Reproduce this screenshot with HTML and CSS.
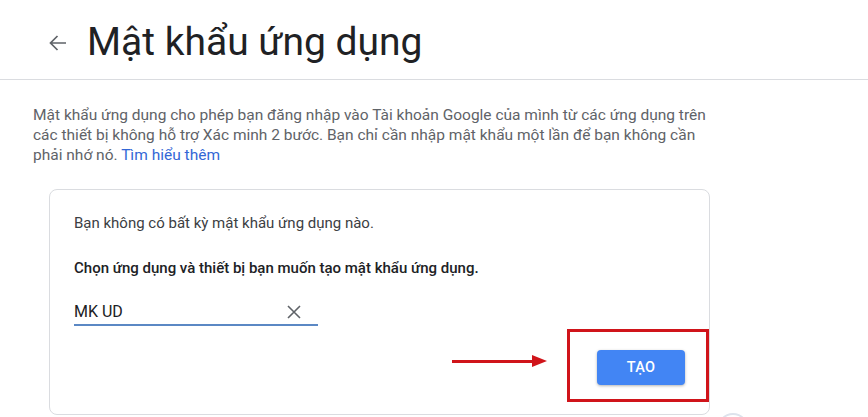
FILE: index.html
```html
<!DOCTYPE html>
<html lang="vi">
<head>
    <meta charset="UTF-8">
    <meta name="viewport" content="width=device-width, initial-scale=1.0">
    <title>Mật khẩu ứng dụng</title>
    <link rel="stylesheet" href="styles.css">
</head>
<body>
    <header class="top-bar">
        <a class="back-link" href="#">
            <svg width="18" height="18" viewBox="0 0 18 18"><path d="M17 9H1.5M8.5 2L1.5 9L8.5 16" fill="none" stroke="#5f6368" stroke-width="1.7"/></svg>
        </a>
        <h1>Mật khẩu ứng dụng</h1>
    </header>

    <main>
        <p class="intro">Mật khẩu ứng dụng cho phép bạn đăng nhập vào Tài khoản Google của mình từ các ứng dụng trên các thiết bị không hỗ trợ Xác minh 2 bước. Bạn chỉ cần nhập mật khẩu một lần để bạn không cần phải nhớ nó. <a href="#">Tìm hiểu thêm</a></p>

        <section class="card">
            <p class="empty-note">Bạn không có bất kỳ mật khẩu ứng dụng nào.</p>
            <p class="choose">Chọn ứng dụng và thiết bị bạn muốn tạo mật khẩu ứng dụng.</p>

            <div class="field">
                <span class="field-value">MK UD</span>
                <svg class="clear-icon" width="14" height="14" viewBox="0 0 14 14"><path d="M1 1L13 13M13 1L1 13" stroke="#5f6368" stroke-width="1.6"/></svg>
            </div>

            <div class="actions">
                <div class="create-wrap">
                    <span class="red-arrow"></span>
                    <span class="red-box"></span>
                    <button class="create-button">TẠO</button>
                </div>
            </div>
        </section>
    </main>

    <span class="help-circle"></span>
</body>
</html>
```

FILE: styles.css
```css
body {
    font-family: Roboto, "Liberation Sans", sans-serif;
    margin: 0;
    padding: 0;
    background-color: #fff;
    color: #3c4043;
    overflow: hidden;
}

.top-bar {
    display: flex;
    align-items: center;
    height: 79px;
    padding-left: 49px;
    border-bottom: 1px solid #dadce0;
}

.back-link {
    display: flex;
    margin-top: 6px;
}

.top-bar h1 {
    margin: 0 0 0 20px;
    font-size: 39px;
    font-weight: 400;
    color: #202124;
    padding-top: 4px;
}

.intro {
    margin: 25px 0 0 33px;
    width: 680px;
    font-size: 15.5px;
    line-height: 20px;
    color: #5f6368;
}

.intro a {
    color: #3367d6;
    text-decoration: none;
}

.card {
    margin: 24px 0 0 49px;
    width: 611px;
    padding: 23px 24px 29px 24px;
    border: 1px solid #dadce0;
    border-radius: 8px;
}

.card p {
    margin: 0;
    font-size: 15px;
    line-height: 20px;
}

.empty-note {
    color: #3c4043;
}

.choose {
    margin-top: 25px !important;
    font-weight: 500;
    color: #202124;
}

.field {
    display: flex;
    align-items: center;
    justify-content: space-between;
    width: 244px;
    margin-top: 24px;
    padding-bottom: 2px;
    border-bottom: 2px solid #5b88c4;
}

.field-value {
    font-size: 16px;
    line-height: 20px;
    color: #202124;
}

.clear-icon {
    margin-right: 17px;
}

.actions {
    display: flex;
    justify-content: flex-end;
    margin-top: 24px;
}

.create-wrap {
    position: relative;
}

.create-button {
    display: block;
    width: 88px;
    height: 35px;
    border: none;
    border-radius: 4px;
    background-color: #4285f4;
    color: white;
    font-family: Roboto, "Liberation Sans", sans-serif;
    font-size: 14.5px;
    font-weight: 500;
    letter-spacing: 0.3px;
    box-shadow: 0 1px 3px rgba(0, 0, 0, 0.3);
    cursor: pointer;
}

.red-box {
    position: absolute;
    top: -21px;
    right: -24px;
    bottom: -17px;
    left: -30px;
    border: 3px solid #d0141a;
}

.red-arrow {
    position: absolute;
    top: 10px;
    left: -145px;
    width: 82px;
    height: 3px;
    background: #d0141a;
}

.red-arrow::after {
    content: "";
    position: absolute;
    left: 80px;
    top: -5px;
    border-left: 15px solid #d0141a;
    border-top: 6px solid transparent;
    border-bottom: 6px solid transparent;
}

.help-circle {
    position: absolute;
    left: 717px;
    top: 413px;
    width: 28px;
    height: 28px;
    border: 2px solid #dde3ec;
    border-radius: 50%;
}
```
